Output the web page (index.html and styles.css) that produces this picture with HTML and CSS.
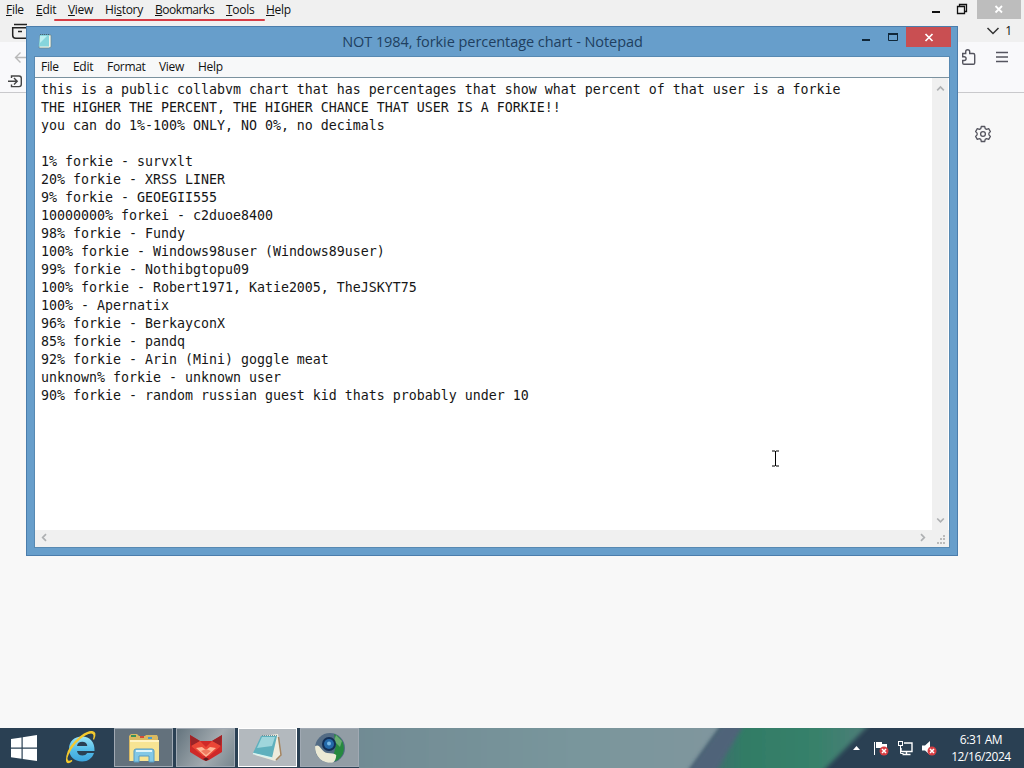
FILE: index.html
```html
<!DOCTYPE html>
<html lang="en">
<head>
  <meta charset="UTF-8" />
  <meta name="viewport" content="width=device-width, initial-scale=1.0"/>
  <title>NOT 1984, forkie percentage chart - Notepad</title>
  <link rel="stylesheet" href="styles.css">
</head>
<body>
  <div class="desktop">
    <div class="browser">
      <div class="browser-menu">
        <div class="menu-items">
          <span class="w-file"><u>F</u>ile</span>
          <span class="w-edit"><u>E</u>dit</span>
          <span class="w-view"><u>V</u>iew</span>
          <span class="w-history">Hi<u>s</u>tory</span>
          <span class="w-bookmarks"><u>B</u>ookmarks</span>
          <span class="w-tools"><u>T</u>ools</span>
          <span class="w-help"><u>H</u>elp</span>
        </div>
        <svg class="browser-controls" width="100" height="19" viewBox="0 0 100 19">
          <rect x="53" y="0" width="44" height="19" fill="#bdbdbd"/>
          <path d="M8 12h8" stroke="#111" stroke-width="2"/>
          <path d="M33.500 6.500h7v7h-7zM35.500 6v-1.500h7v7H41" fill="none" stroke="#111" stroke-width="1.300"/>
          <path d="M71.500 6l6.500 6.500M78 6l-6.500 6.500" stroke="#fff" stroke-width="1.800"/>
        </svg>
      </div>
      <div class="tab-strip">
        <svg width="30" height="23" viewBox="0 0 30 23" fill="none" stroke="#222" stroke-width="1.500">
          <path d="M14 5.500h13M12.700 8.700h16v7.500a3 3 0 0 1-3 3H15.700a3 3 0 0 1-3-3zM18 12.500h4"/>
        </svg>
        <div class="tab-count">
          <svg width="14" height="10" viewBox="0 0 14 10"><path d="M1.500 2l5.500 5.500L12.500 2" fill="none" stroke="#333" stroke-width="1.500"/></svg>
          <span>1</span>
        </div>
      </div>
      <div class="toolbar">
        <svg class="nav-icons" width="30" height="50" viewBox="0 0 30 50" fill="none">
          <path d="M26 15.500H16M20.500 10.500L15.500 15.500l5 5" stroke="#b9b9b9" stroke-width="1.400"/>
          <path d="M11.500 36v-2h7.500q2.300 0 2.300 2.300v6q0 2.300-2.300 2.300h-7.500V42.500M8 39.200h9M14 36l3.200 3.200-3.200 3.200" stroke="#444" stroke-width="1.400"/>
        </svg>
        <svg class="tool-icons" width="66" height="50" viewBox="0 0 66 50" fill="none" stroke="#55555f" stroke-width="1.400">
          <path d="M4.700 11.500h3V9.700a2 2 0 0 1 4 0v1.800h3.500q1.500 0 1.500 1.500v8q0 1.300-1.300 1.300H6q-1.300 0-1.300-1.300v-2.500h1.500a1.900 1.900 0 0 0 0-3.800H4.700z"/>
          <path d="M38 10.500h12M38 15h12M38 19.500h12"/>
        </svg>
      </div>
      <div class="page">
        <svg class="gear" width="18" height="18" viewBox="0 0 18 18" fill="none" stroke="#55555f" stroke-width="1.300" stroke-linejoin="round">
          <path d="M7.300 1.500h3.400l.5 2.100 1.400.8 2.100-.7 1.700 2.900-1.500 1.500v1.800l1.500 1.500-1.700 2.900-2.100-.7-1.400.8-.5 2.100H7.300l-.5-2.100-1.400-.8-2.100.7-1.700-2.900 1.500-1.500V8.100L1.600 6.600l1.700-2.900 2.100.7 1.400-.8z"/>
          <circle cx="9" cy="9" r="2.400"/>
        </svg>
      </div>
      <div class="red-line"></div>
    </div>

    <div class="notepad">
      <div class="title-bar">
        <svg class="app-icon" width="16" height="18" viewBox="0 0 16 18">
          <path d="M3 3h11v12l-2 1H2z" fill="#f4f4e7" stroke="#66848b" stroke-width=".7"/>
          <path d="M3 3h9v11.500H1.700z" fill="#86d5dc"/>
          <path d="M3 4h7L3 11z" fill="#bdeff0"/>
          <path d="M3 2.500h10" stroke="#436772" stroke-dasharray="1 1"/>
        </svg>
        <div class="title">NOT 1984, forkie percentage chart - Notepad</div>
        <div class="window-controls">
          <svg width="46" height="21" viewBox="0 0 46 21"><path d="M2 13h8" stroke="#102739" stroke-width="2"/><path d="M28.500 7.500h9v6h-9z" fill="none" stroke="#102739"/><path d="M28 7h10" stroke="#102739" stroke-width="2"/></svg>
          <div class="close"><svg width="10" height="9" viewBox="0 0 10 9"><path d="M1.500 1l7 7M8.500 1l-7 7" stroke="#fff" stroke-width="1.700"/></svg></div>
        </div>
      </div>
      <div class="client">
        <div class="notepad-menu">
          <span class="w-file">File</span>
          <span class="w-edit">Edit</span>
          <span class="w-format">Format</span>
          <span class="w-view">View</span>
          <span class="w-help">Help</span>
        </div>
        <div class="editor">
<pre class="text">this is a public collabvm chart that has percentages that show what percent of that user is a forkie
THE HIGHER THE PERCENT, THE HIGHER CHANCE THAT USER IS A FORKIE!!
you can do 1%-100% ONLY, NO 0%, no decimals

1% forkie - survxlt
20% forkie - XRSS LINER
9% forkie - GEOEGII555
10000000% forkei - c2duoe8400
98% forkie - Fundy
100% forkie - Windows98user (Windows89user)
99% forkie - Nothibgtopu09
100% forkie - Robert1971, Katie2005, TheJSKYT75
100% - Apernatix
96% forkie - BerkayconX
85% forkie - pandq
92% forkie - Arin (Mini) goggle meat
unknown% forkie - unknown user
90% forkie - random russian guest kid thats probably under 10</pre>
          <div class="scroll-y">
            <svg width="9" height="7" viewBox="0 0 9 7"><path d="M1.200 5.300l3.300-3.300 3.300 3.300"/></svg>
            <svg width="9" height="7" viewBox="0 0 9 7"><path d="M1.200 1.500l3.300 3.300 3.300-3.300"/></svg>
          </div>
        </div>
        <div class="scroll-x">
          <svg width="7" height="9" viewBox="0 0 7 9"><path d="M5 1.200L1.700 4.500 5 7.800"/></svg>
          <svg width="7" height="9" viewBox="0 0 7 9"><path d="M2 1.200l3.300 3.300L2 7.800"/></svg>
          <svg class="grip" width="10" height="10" viewBox="0 0 10 10"><path d="M7 0h2v2H7zM4 3h2v2H4zM7 3h2v2H7zM1 7h2v2H1zM4 7h2v2H4zM7 7h2v2H7z"/></svg>
        </div>
      </div>
    </div>

    <div class="taskbar">
      <div class="launch start">
        <svg width="28" height="28" viewBox="0 0 28 28" fill="#fff"><path d="M1 5l10.500-1.500v10H1zM12.700 3.300L27 1v12.500H12.700zM1 14.700h10.500v10L1 23.200zM12.700 14.700H27V27l-14.300-2z"/></svg>
      </div>
      <div class="launch ie">
        <svg width="36" height="36" viewBox="0 0 36 36" fill="none">
          <defs>
            <linearGradient id="blue" x1="0" y1="0" x2="0" y2="1"><stop stop-color="#9be4f7"/><stop offset=".5" stop-color="#58c0ea"/><stop offset="1" stop-color="#3ba3dd"/></linearGradient>
          </defs>
          <path d="M19 6.500c8 0 13 5.500 12.500 14.500H14c.5 3 2.500 4.500 5.500 4.500 2.200 0 3.700-.8 4.700-2.500h6.800c-2 5.500-6 8.500-11.800 8.500-8 0-13.200-5-13.200-12.500S11 6.500 19 6.500zM14 16h10.300c-.3-3-2.300-4.300-5.100-4.300S14.500 13 14 16z" fill="url(#blue)"/>
          <path d="M9 30.500c-5 4.500-7 1-4-6C8 17 15 9 22 5c6-3.500 11-3 8.500 4.500 5-11-5-9-12 -3.500C11 12 5 20 4 26c-1 6 2 6 5 4.500z" fill="#f4c92e" stroke="#f4c92e" stroke-width="1.300"/>
        </svg>
      </div>
      <div class="task explorer">
        <svg width="34" height="30" viewBox="0 0 34 30">
          <path d="M2 3l2-2h6l2 2h6l1-1h11l1 2v24H2z" fill="#d9b961"/>
          <path d="M3 7h29v21H3z" fill="#f7e493"/>
          <path d="M4 3h5" stroke="#38915b" stroke-width="2"/><path d="M13 4h4" stroke="#d54d39" stroke-width="2"/><path d="M21 5h4" stroke="#4b9bcc" stroke-width="2"/>
          <path d="M3 8h29" stroke="#fff4c4" stroke-width="2"/>
          <path d="M7 29V18q0-2 2-2h16q2 0 2 2v11h-5v-6H12v6z" fill="#82c8e6" stroke="#579bc2"/>
          <path d="M9 18h16" stroke="#dff5fa" stroke-width="2"/>
        </svg>
      </div>
      <div class="task fox">
        <svg width="34" height="28" viewBox="0 0 34 28">
          <path d="M1 1l10 6h12l10-6v17l-13 8-3 1-3-1L1 18z" fill="#cf2928"/>
          <path d="M1 1l10 6-9 6zM33 1L23 7l9 6z" fill="#9c2428"/>
          <path d="M2 12l9-5 6 6 6-6 9 5-12 10h-6z" fill="#ea4636"/>
          <path d="M7 14l6-1 4 3 4-3 6 1-10 9z" fill="#ffb797"/>
          <path d="M12 17l5-2 5 2-5 4z" fill="#f07a60"/>
          <path d="M14 25l3-1.500 3 1.500-3 2z" fill="#5c1c20"/>
        </svg>
      </div>
      <div class="task note active">
        <svg width="34" height="30" viewBox="0 0 34 30">
          <path d="M11 3l16-2 3 22-6 5L4 22z" fill="#efebdc"/>
          <path d="M27.500 4l2.500 18-5 5" fill="none" stroke="#a58561" stroke-width="1.500"/>
          <path d="M10 3h16l-5 22L2 20z" fill="#5fb0bd"/>
          <path d="M11 4h13l-3 9L6 15z" fill="#9fd6dc"/>
          <path d="M2 20.500l19 4.500" stroke="#d8f4f2" stroke-width="1.500"/>
          <path d="M11 2.500h15" stroke="#6f9199" stroke-dasharray="1 1"/>
        </svg>
      </div>
      <div class="task globe">
        <svg width="32" height="32" viewBox="0 0 32 32">
          <circle cx="16" cy="16" r="15" fill="#526b84"/>
          <path d="M20 2a15 15 0 0 1 4 26l-6 2 4-17z" fill="#26893f"/>
          <path d="M22 3l6 6-2 6-6-6z" fill="#68ac70"/>
          <path d="M1.200 14c5-3 6 6 12 7 4 .7 7 0 9 2 0 3-1 6-3 7.500A15 15 0 0 1 1.200 14z" fill="#ecead5"/>
          <circle cx="15" cy="12" r="7" fill="#122f57"/><circle cx="15" cy="12" r="5" fill="#2469a9"/>
          <circle cx="15" cy="11.500" r="2" fill="#78b9e6"/>
        </svg>
      </div>
      <svg class="wallpaper" width="666" height="40" viewBox="0 0 666 40">
        <defs>
          <linearGradient id="gray"><stop stop-color="#718b94"/><stop offset=".6" stop-color="#79969c"/><stop offset="1" stop-color="#80969e"/></linearGradient>
          <linearGradient id="green"><stop stop-color="#4b6478"/><stop offset=".3" stop-color="#327c65"/><stop offset=".7" stop-color="#37816b"/><stop offset="1" stop-color="#4f7d79"/></linearGradient>
          <filter id="soft"><feGaussianBlur stdDeviation="2"/></filter>
        </defs>
        <rect width="666" height="40" fill="#2a4053"/>
        <path d="M-5-5H366l-36 50H-5z" fill="url(#gray)" filter="url(#soft)"/>
        <path d="M366-5H512l-50 50H330z" fill="url(#green)" filter="url(#soft)"/>
        <path d="M364-5h22l-30 50h-28z" fill="#506479" filter="url(#soft)"/>
      </svg>
      <div class="tray">
        <svg width="84" height="18" viewBox="0 0 84 18" fill="none">
          <path d="M0 11l3.500-4 3.500 4z" fill="#fff"/>
          <path d="M21.500 3v13" stroke="#fff"/><path d="M23 3h6v2h5v6h-5V9h-6z" fill="#fff"/>
          <path d="M51 4h8v8.500H48V9M53.500 12.500v3M49.500 15.500h8" stroke="#fff" stroke-width="1.400"/>
          <rect x="45.500" y="2.500" width="4" height="4" stroke="#fff"/><path d="M47.500 6.500v8h3" stroke="#fff"/>
          <path d="M69 6.500h3L77 2v14l-5-4.500h-3z" fill="#fff"/>
          <circle cx="31" cy="12" r="4.500" fill="#d83e43"/><path d="M29 10l4 4m0-4l-4 4" stroke="#fff" stroke-width="1.500"/>
          <circle cx="79" cy="12" r="4.500" fill="#d83e43"/><path d="M77 10l4 4m0-4l-4 4" stroke="#fff" stroke-width="1.500"/>
        </svg>
        <div class="clock"><div>6:31 AM</div><div class="date">12/16/2024</div></div>
      </div>
    </div>
    <svg class="cursor" width="9" height="17" viewBox="0 0 9 17"><path d="M1 1h3M5 1h3M4.500 1v15M1 16h3M5 16h3" stroke="#000" fill="none"/></svg>
  </div>
</body>
</html>
```
FILE: styles.css
```css
* {
  box-sizing: border-box;
}

body {
  margin: 0;
  font-family: "Open Sans", "Noto Sans", sans-serif;
  font-size: 12px;
  color: #111;
}

svg {
  display: block;
  flex-shrink: 0;
}

.desktop {
  position: relative;
  width: 1024px;
  height: 768px;
  overflow: hidden;
  display: flex;
  flex-direction: column;
}

.browser {
  height: 728px;
  background: #f8f8f8;
}

.browser-menu {
  height: 19px;
  background: #f0f0f0;
  display: flex;
  justify-content: space-between;
  line-height: 20px;
}

.menu-items,
.notepad-menu {
  display: flex;
  gap: 12px;
  padding-left: 6px;
  white-space: nowrap;
  letter-spacing: -0.3px;
}

.menu-items u {
  text-underline-offset: 1px;
}

.w-file { width: 18px; }
.w-edit { width: 20px; }
.w-view { width: 25px; }
.w-history { width: 38px; }
.w-bookmarks {
  width: 59px;
  letter-spacing: -0.45px;
}
.w-tools { width: 28px; }
.w-help { width: 26px; }
.w-format { width: 39px; }

.tab-strip {
  height: 23px;
  background: #f0f0f0;
  display: flex;
  justify-content: space-between;
}

.tab-count {
  display: flex;
  align-items: center;
  gap: 5px;
  padding-right: 12px;
}

.toolbar {
  height: 51px;
  background: #f9f9fb;
  border-bottom: 1px solid #c9c9cc;
  display: flex;
  justify-content: space-between;
}

.page {
  height: 635px;
  padding: 32px 32px 0 0;
}

.gear {
  margin-left: auto;
}

.red-line {
  position: absolute;
  left: 54px;
  top: 19px;
  width: 211px;
  height: 2px;
  background: #d63c45;
  border-radius: 2px;
}

.notepad {
  position: absolute;
  left: 26px;
  top: 26px;
  width: 932px;
  height: 530px;
  padding: 0 8px 8px;
  background: #679ecb;
  border: 1px solid #4b7dac;
}

.title-bar {
  height: 30px;
  display: flex;
  margin-right: -2px;
}

.app-icon {
  margin: 5px 0 0 2px;
}

.title {
  flex: 1;
  padding-left: 72px;
  text-align: center;
  font-size: 14.5px;
  line-height: 30px;
  letter-spacing: -0.06px;
  color: #203f60;
}

.window-controls {
  display: flex;
}

.close {
  width: 45px;
  height: 20px;
  background: #c94f52;
  display: flex;
  align-items: center;
  justify-content: center;
}

.client {
  height: 490px;
  background: #fff;
  outline: 1px solid #5789b2;
}

.notepad-menu {
  height: 21px;
  background: #f7f8f9;
  border-bottom: 1px solid #7b929f;
  line-height: 20px;
  gap: 14px;
}

.notepad-menu .w-file { width: 18px; }
.notepad-menu .w-format { width: 38px; }

.editor {
  height: 452px;
  display: flex;
}

.text {
  flex: 1;
  margin: 0;
  padding: 3px 0 0 6px;
  font-family: "DejaVu Sans Mono", monospace;
  font-size: 13.29px;
  line-height: 18px;
  color: #161616;
}

.scroll-y {
  width: 16px;
  margin-right: 1px;
  padding: 7px 0 6px;
  background: #f0f0f0;
  display: flex;
  flex-direction: column;
  justify-content: space-between;
  align-items: center;
}

.scroll-x {
  height: 17px;
  background: #f0f0f0;
  display: flex;
  align-items: center;
  justify-content: space-between;
  padding: 0 3px 2px 6px;
}

.scroll-x svg:first-child {
  margin-right: auto;
}

.scroll-y path,
.scroll-x path {
  fill: none;
  stroke: #aeb0b2;
  stroke-width: 1.7;
}

.scroll-x .grip {
  margin: 4px 0 0 10px;
}

.scroll-x .grip path {
  fill: #bbb;
  stroke: none;
}

.taskbar {
  position: relative;
  height: 40px;
  display: flex;
  background: #2a4053;
  color: #fff;
}

.launch,
.task {
  display: flex;
  align-items: center;
  justify-content: center;
}

.start {
  width: 48px;
}

.ie {
  width: 65px;
}

.task {
  width: 59px;
  height: 39px;
  margin-right: 3px;
  border: 1px solid #a0a9b3;
  background: #8897a2;
}

.explorer {
  background: #63717c;
  margin-left: 1px;
}

.fox {
  background: linear-gradient(120deg, #64747e, #a3abb0 60%, #77868e);
}

.active {
  background: #b3b9be;
  border-color: #fff;
}

.globe {
  background: #929da5;
  margin-right: 0;
}

.wallpaper {
  margin-right: -666px;
}

.tray {
  margin-left: auto;
  position: relative;
  display: flex;
  align-items: center;
  gap: 13px;
  padding-right: 12px;
}

.clock {
  width: 62px;
  text-align: center;
  line-height: 17px;
  letter-spacing: -0.4px;
  white-space: nowrap;
}
.cursor {
  position: absolute;
  left: 771px;
  top: 450px;
}
```
